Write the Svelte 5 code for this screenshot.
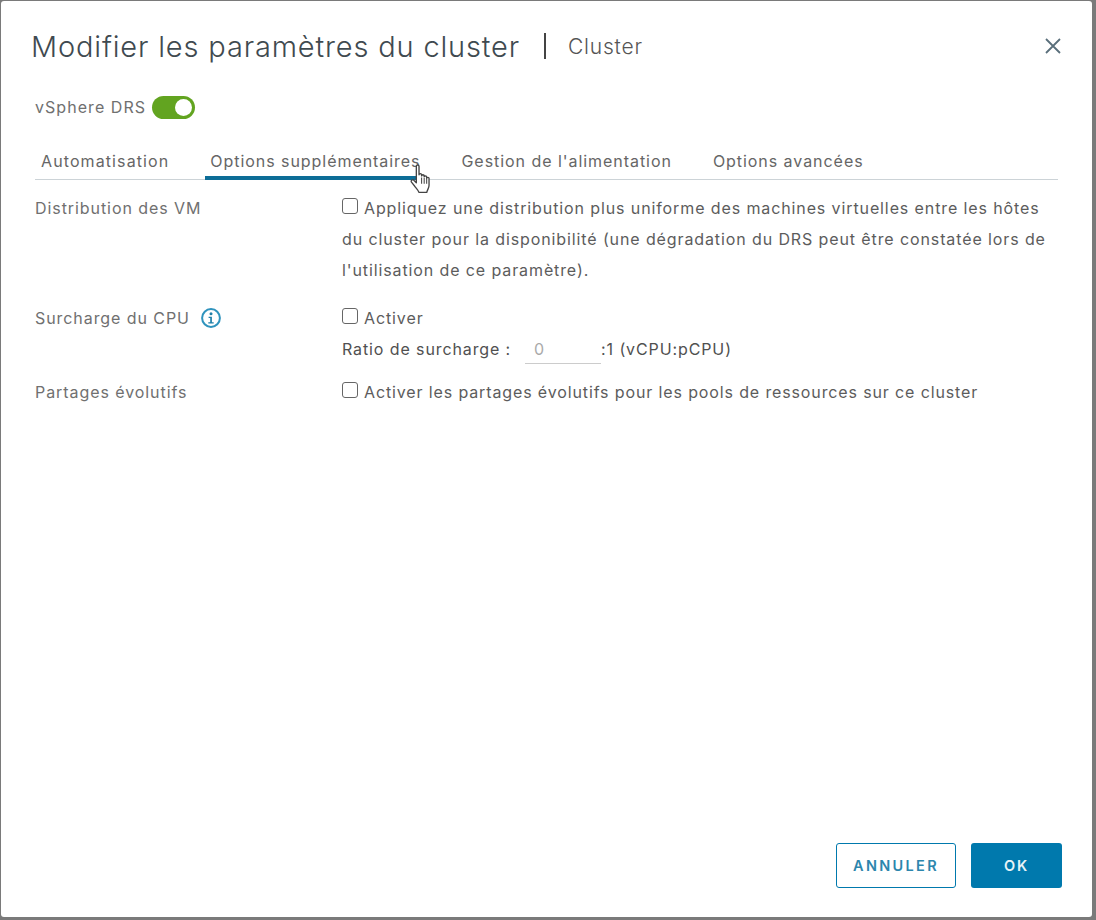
<script lang="ts">
  const tabs = [
    { label: 'Automatisation', active: false },
    { label: 'Options supplémentaires', active: true },
    { label: "Gestion de l'alimentation", active: false },
    { label: 'Options avancées', active: false }
  ]
</script>

<div class="page">
  <div class="dialog">
    <header>
      <h1>Modifier les paramètres du cluster</h1>
      <span class="sep"></span>
      <span class="sub">Cluster</span>
      <button class="close" aria-label="Fermer">
        <svg width="18" height="18" viewBox="0 0 18 18">
          <path d="M2 2 L16 16 M16 2 L2 16" stroke="#5a6f7b" stroke-width="1.8" fill="none" />
        </svg>
      </button>
    </header>

    <div class="drs">
      <span>vSphere DRS</span>
      <span class="toggle"><span class="knob"></span></span>
    </div>

    <nav>
      {#each tabs as t}
        <div class="tab" class:active={t.active}>{t.label}</div>
      {/each}
      <svg class="hand" width="23" height="31" viewBox="0 0 22 30">
        <path
          d="M6 2.2c0-1.6 2.6-1.6 2.6 0v8.3c0-1.5 2.5-1.5 2.5 0v1c0-1.5 2.5-1.5 2.5 0v1c0-1.4 2.4-1.4 2.4 0v1.4c0-1.3 2.3-1.3 2.3 0v6.6c0 3-1.6 4.2-2.2 7H8.500c-.8-2.600-2.400-3.600-4.200-6.200L1.300 17.500c-1-1.800 1.300-3 2.500-1.600L6 18.200z"
          fill="#fff"
          stroke="#444"
          stroke-width="1.3"
          stroke-linejoin="round"
        />
        <path d="M11.100 13v6M13.600 13.500v5.500M16 14v5" stroke="#444" stroke-width="1" fill="none" />
      </svg>
    </nav>

    <div class="rows">
      <div class="row r1">
        <div class="label">Distribution des VM</div>
        <div class="ctl">
          <span class="box"></span>Appliquez une distribution plus uniforme des machines virtuelles entre les hôtes<br />
          du cluster pour la disponibilité (une dégradation du DRS peut être constatée lors de<br />
          l'utilisation de ce paramètre).
        </div>
      </div>
      <div class="row r2">
        <div class="label">
          Surcharge du CPU
          <svg class="info" width="20" height="20" viewBox="0 0 20 20">
            <circle cx="10" cy="10" r="8.900" fill="none" stroke="#2f93bd" stroke-width="2" />
            <circle cx="10" cy="5.800" r="1.500" fill="#1f7fa8" />
            <path d="M7.600 8.700h3.300v5.600h1.800v1.300H7.300v-1.300h1.900v-4.300H7.600z" fill="#1f7fa8" />
          </svg>
        </div>
        <div class="ctl">
          <div><span class="box"></span>Activer</div>
          <div class="ratio">
            <span>Ratio de surcharge :</span>
            <span class="input">0</span>
            <span>:1 (vCPU:pCPU)</span>
          </div>
        </div>
      </div>
      <div class="row r3">
        <div class="label">Partages évolutifs</div>
        <div class="ctl">
          <span class="box"></span>Activer les partages évolutifs pour les pools de ressources sur ce cluster
        </div>
      </div>
    </div>

    <footer>
      <button class="btn outline">ANNULER</button>
      <button class="btn primary">OK</button>
    </footer>
  </div>
</div>

<style>
  :global(body) {
    margin: 0;
    background: #7a7a7a;
  }

  .page {
    width: 1096px;
    height: 920px;
    padding: 1px 4px 3px 1px;
    box-sizing: border-box;
  }

  .dialog {
    height: 100%;
    background: #fff;
    border-radius: 3px;
    box-sizing: border-box;
    padding: 0 33px 29px 34px;
    display: flex;
    flex-direction: column;
    font-family: Inter, 'Liberation Sans', sans-serif;
    color: #5c5c5c;
    font-size: 16px;
    letter-spacing: 0.93px;
  }

  header {
    display: flex;
    align-items: center;
    height: 90px;
    margin-left: -4px;
    margin-right: -3px;
  }

  h1 {
    margin: 0;
    font-weight: 300;
    font-size: 29px;
    letter-spacing: 0.84px;
    color: #3f4a50;
    white-space: nowrap;
  }

  .sep {
    width: 2px;
    height: 26px;
    background: #444;
    margin: 0 22px 0 24px;
  }

  .sub {
    font-size: 21px;
    font-weight: 300;
    letter-spacing: 0.8px;
    color: #555;
  }

  .close {
    margin-left: auto;
    padding: 0;
    border: 0;
    background: none;
    display: flex;
  }

  .drs {
    display: flex;
    align-items: center;
    gap: 6px;
    height: 24px;
    color: #707070;
    margin-top: 4px;
    letter-spacing: 1.05px;
  }

  .toggle {
    width: 43px;
    height: 23px;
    border-radius: 12px;
    background: #62a420;
    position: relative;
  }

  .knob {
    position: absolute;
    right: 3px;
    top: 3px;
    width: 17px;
    height: 17px;
    border-radius: 50%;
    background: #fff;
  }

  nav {
    display: flex;
    gap: 31px;
    margin-top: 21px;
    height: 40px;
    padding-left: 1px;
    border-bottom: 1px solid #ccd3d7;
    position: relative;
    box-sizing: border-box;
    margin-right: 1px;
  }

  .tab {
    padding: 0 5px;
    height: 36px;
    line-height: 42px;
    color: #666;
    white-space: nowrap;
    letter-spacing: 0.95px;
  }

  .tab:first-child {
    letter-spacing: 1.1px;
  }

  .tab.active {
    border-bottom: 4px solid #0d6d97;
  }

  .hand {
    position: absolute;
    left: 375px;
    top: 24px;
  }

  .rows {
    display: flex;
    flex-direction: column;
    margin-top: 13px;
    line-height: 31px;
  }

  .row {
    display: grid;
    grid-template-columns: 307px 1fr;
  }

  .r2 {
    margin-top: 17px;
  }

  .r3 {
    margin-top: 12px;
  }

  .label {
    color: #707070;
    display: flex;
    align-items: flex-start;
    gap: 11px;
  }

  .ctl {
    letter-spacing: 0.89px;
  }

  .r3 .ctl {
    letter-spacing: 0.87px;
  }

  .info {
    margin-top: 5px;
  }

  .box {
    display: inline-block;
    width: 14px;
    height: 14px;
    border: 1.300px solid #666;
    border-radius: 3px;
    margin-right: 6px;
    vertical-align: 0;
  }

  .ratio {
    display: flex;
    color: #505050;
  }

  .input {
    width: 76px;
    margin-left: 14px;
    padding-left: 9px;
    box-sizing: border-box;
    color: #aaa;
    height: 30px;
    border-bottom: 1px solid #ccc;
  }

  footer {
    margin-top: auto;
    display: flex;
    justify-content: flex-end;
    gap: 15px;
    margin-right: -3px;
  }

  .btn {
    height: 45px;
    border-radius: 3px;
    font-family: Inter, 'Liberation Sans', sans-serif;
    font-size: 14.500px;
    font-weight: 600;
    letter-spacing: 2.300px;
  }

  .outline {
    width: 120px;
    background: #fff;
    border: 1px solid #0079ad;
    color: #2c86ad;
  }

  .primary {
    width: 91px;
    background: #0079ad;
    border: 0;
    color: #e8f3f7;
    letter-spacing: 1.800px;
  }
</style>
